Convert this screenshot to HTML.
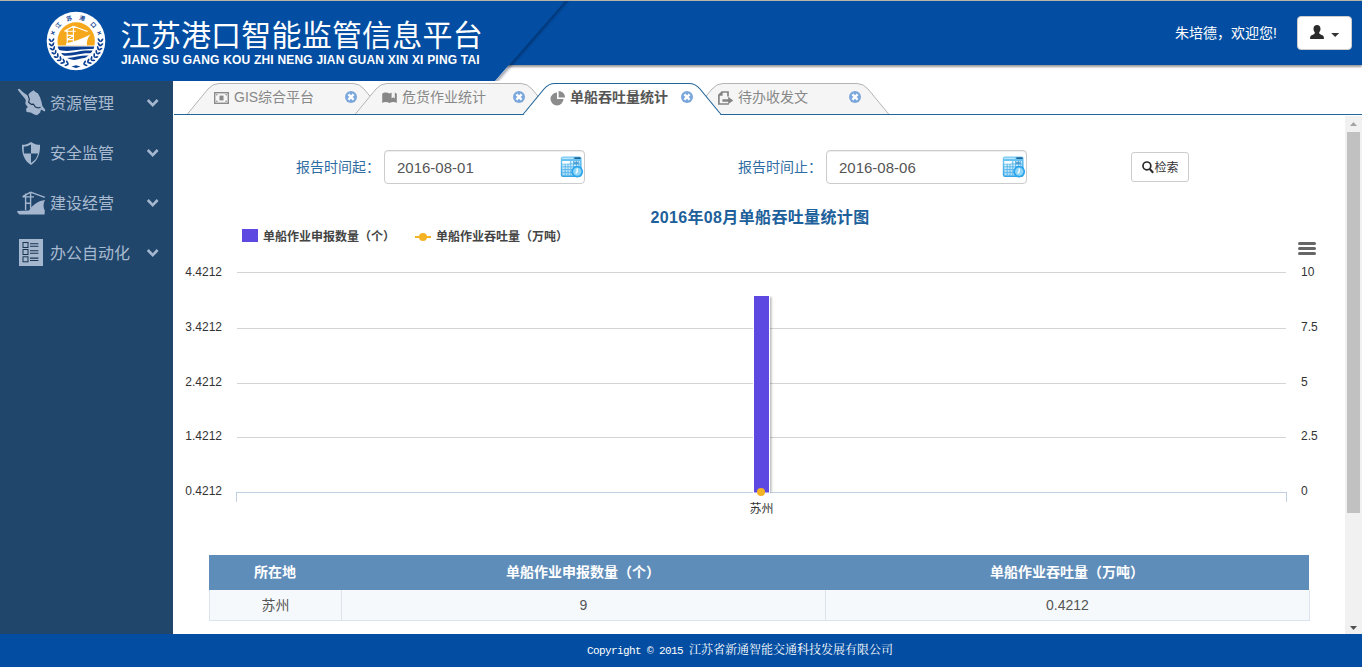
<!DOCTYPE html>
<html lang="zh-CN">
<head>
<meta charset="utf-8">
<title>江苏港口智能监管信息平台</title>
<style>
*{box-sizing:border-box;margin:0;padding:0}
html,body{width:1362px;height:667px;overflow:hidden;background:#fff}
body{position:relative;font-family:"Liberation Sans","Noto Sans CJK SC",sans-serif;font-size:14px;color:#333}
.abs{position:absolute}
#topline{left:0;top:0;width:1362px;height:1px;background:#b9b4a8}
#hdr{left:0;top:1px;width:1362px;height:64px;background:#034ea2;box-shadow:0 2px 2px rgba(0,0,0,.4)}
#hdrsvg{left:0;top:0;width:1362px;height:90px}
#title{left:120.5px;top:15.5px;font-size:30px;line-height:40px;color:#fff;white-space:nowrap;letter-spacing:.2px}
#sub{left:121px;top:53px;font-size:12px;line-height:14px;font-weight:bold;color:#fff;white-space:nowrap;letter-spacing:.2px}
#welcome{left:1175px;top:23px;font-size:14px;line-height:20px;color:#fff;white-space:nowrap}
#userbtn{left:1297px;top:16px;width:55px;height:34px;background:#fff;border-radius:4px;border:1px solid #ccc}
#side{left:0;top:81px;width:173px;height:553px;background:#21466b}
.mi{left:0;width:173px;height:50px;color:#a8bad0;font-size:16px;line-height:50px;white-space:nowrap}
.mi span{position:absolute;left:50px;top:0}
.mi svg{position:absolute}
#foot{left:0;top:634px;width:1362px;height:33px;background:#034ea2;color:#fff}
#foot div{position:absolute;left:587px;top:9px;font-size:12px;line-height:16px;white-space:pre;font-family:"Liberation Mono","Noto Serif CJK SC",monospace}
#foot span{font-size:11px;letter-spacing:-.6px}
#sbar{left:1345px;top:116px;width:17px;height:518px;background:#f1f1f1}
#sthumb{left:1347px;top:132px;width:13px;height:381px;background:#c1c1c1}
.tabtxt{font-size:14px;line-height:20px;color:#888;white-space:nowrap}
.lbl{font-size:14px;line-height:20px;color:#2f6ca3;white-space:nowrap;text-align:right;width:120px}
.inp{width:201px;height:34px;border:1px solid #ccc;border-radius:4px;background:#fff;box-shadow:inset 0 1px 1px rgba(0,0,0,.075);font-size:15px;line-height:33px;color:#555;padding-left:12px}
#btn{left:1131px;top:152px;width:58px;height:30px;border:1px solid #ccc;border-radius:3px;background:#fff;font-size:12px;line-height:28px;color:#333}
#ctitle{left:460px;top:207px;width:600px;text-align:center;font-size:16px;line-height:22px;font-weight:bold;color:#20609a;white-space:nowrap;letter-spacing:.35px}
.leg{font-size:12px;line-height:16px;font-weight:bold;color:#444;white-space:nowrap}
.yl{font-size:12px;line-height:14px;color:#333;white-space:nowrap}
.yl.l{left:150px;width:72px;text-align:right}
.yl.r{left:1301px}
#tbl{left:209px;top:555px;width:1100px}
.th{top:555px;height:35px;background:#5f8dba;color:#fff;font-weight:bold;font-size:14px;line-height:34px;text-align:center}
.td{top:590px;height:31px;background:#f5f9fc;color:#555;font-size:14px;line-height:30px;text-align:center;border-bottom:1px solid #dbe4ec;border-right:1px solid #dbe4ec}
</style>
</head>
<body>
<!-- header -->
<div id="hdr" class="abs"></div>
<svg id="hdrsvg" class="abs" viewBox="0 0 1362 90">
  <defs>
    <linearGradient id="dg" x1="0" y1="0" x2="1" y2="0"><stop offset="0" stop-color="#000" stop-opacity=".35"/><stop offset="1" stop-color="#000" stop-opacity="0"/></linearGradient>
    <filter id="sh2" x="-20%" y="-20%" width="140%" height="140%"><feGaussianBlur stdDeviation="1.5"/></filter>
    <filter id="sh" x="-5%" y="-5%" width="110%" height="120%"><feGaussianBlur stdDeviation="1.6"/></filter>
  </defs>
    <polygon points="0,1 565,1 495,81 0,81" fill="#034ea2"/>
  <clipPath id="dclip"><polygon points="565.3,1 1362,1 1362,81 495.3,81"/></clipPath>
  <g clip-path="url(#dclip)"><path d="M567.2,-1 L493.3,83.5" stroke="#00102e" stroke-width="3.4" opacity=".48" filter="url(#sh2)"/></g>
</svg>

<svg id="logo" class="abs" style="left:40px;top:5px;width:72px;height:72px" viewBox="40 5 72 72">
  <defs>
    <clipPath id="sunclip"><rect x="50" y="15" width="52" height="30.4"/></clipPath>
    <clipPath id="seaclip"><circle cx="76" cy="41" r="19.2"/></clipPath>
    
  </defs>
  <circle cx="76" cy="41" r="29.3" fill="#fff"/>
  <circle cx="76.2" cy="41" r="18.7" fill="#f5a81c" clip-path="url(#sunclip)"/>
  <!-- ship -->
  <path d="M66,45.4 L66,43.4 C74,41.4 83,38.6 90.6,34.6 C87.4,38 86.4,41.6 87,45.4 Z" fill="#fff"/>
  <path d="M67.2,44 V29.8 M73.4,42.4 V26 M64.4,31.2 H75.8 M67.2,35.4 H73.4 M67.2,39.6 L73.4,35.4 M67.2,39.6 H73.4 M73.4,26.2 L87.6,31.6 M73.4,26.2 L64.6,31" fill="none" stroke="#fff" stroke-width="1.1"/>
  <!-- sea -->
  <g clip-path="url(#seaclip)" fill="#0b3f93">
    <path d="M56,46.4 H96 V49.2 C88,48.4 80,49.6 72,50.6 C66,51.4 61,50.6 57,49.6 Z"/>
    <path d="M58.6,52.6 C64,53.6 70,53.2 76,52 C83,50.6 89,50.2 95,51 L93.6,53.6 C88,52.8 82,53.4 76,54.8 C70,56 65,56 60.4,55.2 Z"/>
    <path d="M62.6,57.6 C67,58.2 72,57.8 77,56.6 C82,55.4 87,55.2 92.4,55.8 L90.4,58.2 C86,57.6 82,58.2 78,59.2 C73,60.4 69,60.4 65.4,59.8 Z"/>
    <path d="M69,61.8 C73,62 77,61.2 80,60.6 C83,60 86,60 88.6,60.2 L86,62.2 C83,62 80,62.6 77,63.2 C75,63.6 73,63.4 72,63.2 Z"/>
  </g>
  <!-- wreath -->
  <g fill="#0b3f93"><g transform="translate(83.54,64.21) rotate(32.0)"><ellipse cx="0" cy="-2.1" rx="0.9" ry="2.2"/></g><g transform="translate(83.54,64.21) rotate(112.0)"><ellipse cx="0" cy="-2.1" rx="0.9" ry="2.2"/></g><g transform="translate(87.46,62.54) rotate(22.0)"><ellipse cx="0" cy="-2.1" rx="0.9" ry="2.2"/></g><g transform="translate(87.46,62.54) rotate(102.0)"><ellipse cx="0" cy="-2.1" rx="0.9" ry="2.2"/></g><g transform="translate(91.02,60.23) rotate(12.0)"><ellipse cx="0" cy="-2.1" rx="0.9" ry="2.2"/></g><g transform="translate(91.02,60.23) rotate(92.0)"><ellipse cx="0" cy="-2.1" rx="0.9" ry="2.2"/></g><g transform="translate(94.13,57.33) rotate(2.0)"><ellipse cx="0" cy="-2.1" rx="0.9" ry="2.2"/></g><g transform="translate(94.13,57.33) rotate(82.0)"><ellipse cx="0" cy="-2.1" rx="0.9" ry="2.2"/></g><g transform="translate(96.69,53.93) rotate(-8.0)"><ellipse cx="0" cy="-2.1" rx="0.9" ry="2.2"/></g><g transform="translate(96.69,53.93) rotate(72.0)"><ellipse cx="0" cy="-2.1" rx="0.9" ry="2.2"/></g><g transform="translate(98.62,50.14) rotate(-18.0)"><ellipse cx="0" cy="-2.1" rx="0.9" ry="2.2"/></g><g transform="translate(98.62,50.14) rotate(62.0)"><ellipse cx="0" cy="-2.1" rx="0.9" ry="2.2"/></g><g transform="translate(99.87,46.07) rotate(-28.0)"><ellipse cx="0" cy="-2.1" rx="0.9" ry="2.2"/></g><g transform="translate(99.87,46.07) rotate(52.0)"><ellipse cx="0" cy="-2.1" rx="0.9" ry="2.2"/></g><g transform="translate(100.39,41.85) rotate(-38.0)"><ellipse cx="0" cy="-2.1" rx="0.9" ry="2.2"/></g><g transform="translate(100.39,41.85) rotate(42.0)"><ellipse cx="0" cy="-2.1" rx="0.9" ry="2.2"/></g><g transform="translate(68.46,64.21) rotate(-32.0)"><ellipse cx="0" cy="-2.1" rx="0.9" ry="2.2"/></g><g transform="translate(68.46,64.21) rotate(-112.0)"><ellipse cx="0" cy="-2.1" rx="0.9" ry="2.2"/></g><g transform="translate(64.54,62.54) rotate(-22.0)"><ellipse cx="0" cy="-2.1" rx="0.9" ry="2.2"/></g><g transform="translate(64.54,62.54) rotate(-102.0)"><ellipse cx="0" cy="-2.1" rx="0.9" ry="2.2"/></g><g transform="translate(60.98,60.23) rotate(-12.0)"><ellipse cx="0" cy="-2.1" rx="0.9" ry="2.2"/></g><g transform="translate(60.98,60.23) rotate(-92.0)"><ellipse cx="0" cy="-2.1" rx="0.9" ry="2.2"/></g><g transform="translate(57.87,57.33) rotate(-2.0)"><ellipse cx="0" cy="-2.1" rx="0.9" ry="2.2"/></g><g transform="translate(57.87,57.33) rotate(-82.0)"><ellipse cx="0" cy="-2.1" rx="0.9" ry="2.2"/></g><g transform="translate(55.31,53.93) rotate(8.0)"><ellipse cx="0" cy="-2.1" rx="0.9" ry="2.2"/></g><g transform="translate(55.31,53.93) rotate(-72.0)"><ellipse cx="0" cy="-2.1" rx="0.9" ry="2.2"/></g><g transform="translate(53.38,50.14) rotate(18.0)"><ellipse cx="0" cy="-2.1" rx="0.9" ry="2.2"/></g><g transform="translate(53.38,50.14) rotate(-62.0)"><ellipse cx="0" cy="-2.1" rx="0.9" ry="2.2"/></g><g transform="translate(52.13,46.07) rotate(28.0)"><ellipse cx="0" cy="-2.1" rx="0.9" ry="2.2"/></g><g transform="translate(52.13,46.07) rotate(-52.0)"><ellipse cx="0" cy="-2.1" rx="0.9" ry="2.2"/></g><g transform="translate(51.61,41.85) rotate(38.0)"><ellipse cx="0" cy="-2.1" rx="0.9" ry="2.2"/></g><g transform="translate(51.61,41.85) rotate(-42.0)"><ellipse cx="0" cy="-2.1" rx="0.9" ry="2.2"/></g></g>
  <path d="M71.5,66.6 L76,65.2 L80.5,66.6 L76,68Z" fill="#0b3f93"/>
  <g font-family="'Liberation Sans','Noto Sans CJK SC',sans-serif" font-weight="bold" fill="#0b3f93"><text x="0" y="0" font-size="7.5" text-anchor="middle" dominant-baseline="central" transform="translate(52.74,32.99) rotate(-71)">×</text><text x="0" y="0" font-size="5.6" text-anchor="middle" dominant-baseline="central" transform="translate(58.46,25.21) rotate(-48)">江</text><text x="0" y="0" font-size="5.6" text-anchor="middle" dominant-baseline="central" transform="translate(69.10,18.43) rotate(-17)">苏</text><text x="0" y="0" font-size="5.6" text-anchor="middle" dominant-baseline="central" transform="translate(82.11,18.20) rotate(15)">港</text><text x="0" y="0" font-size="5.6" text-anchor="middle" dominant-baseline="central" transform="translate(93.26,24.90) rotate(47)">口</text><text x="0" y="0" font-size="7.5" text-anchor="middle" dominant-baseline="central" transform="translate(99.26,32.99) rotate(71)">×</text></g>
</svg>
<div id="topline" class="abs"></div>
<div id="title" class="abs">江苏港口智能监管信息平台</div>
<div id="sub" class="abs">JIANG SU GANG KOU ZHI NENG JIAN GUAN XIN XI PING TAI</div>
<div id="welcome" class="abs">朱培德，欢迎您!</div>
<div id="userbtn" class="abs"><svg style="position:absolute;left:0;top:0" width="53" height="32" viewBox="1298 17 53 32">
  <path d="M1317,25 c2.2,0 3.5,1.6 3.5,3.8 c0,1.6 -0.7,3 -1.4,3.8 c0.1,1.2 0.6,1.6 2,2.1 c1.8,0.7 2.8,1.3 2.8,3 v1.3 h-13.8 v-1.3 c0,-1.7 1,-2.3 2.8,-3 c1.4,-0.5 1.9,-0.9 2,-2.1 c-0.7,-0.8 -1.4,-2.2 -1.4,-3.8 c0,-2.2 1.3,-3.8 3.5,-3.8z" fill="#2b2b2b"/>
  <path d="M1331.2,33 h8 l-4,4z" fill="#333"/>
</svg></div>

<!-- sidebar -->
<div id="side" class="abs">
  <svg class="abs" style="left:0;top:-1px;width:173px;height:200px" viewBox="0 80 173 200">
    <!-- map -->
    <path d="M17.6,89.6 L19.4,88.8 L23,92.2 L27.6,95.4 L30.2,92.6 L33.6,90.2 L35.4,92 L38,93.6 L40,97.2 L41.4,101.4 L42.4,106 L45.4,110 L44.6,111.4 L41,109.6 L40.2,112.4 L37,115.2 L34.4,114.4 L30.6,112.6 L26.6,112 L26,109 L27.8,107 L25.4,104 L25.8,100 L24,97.4 L21.4,94.6 Z" fill="#a4b7cf"/>
    <path d="M27.8,94.6 L29.4,99.2 L28.6,102.2 L31.4,104.4 L33.4,104.2 L35.4,107 L38.4,108 L40.6,107.2" fill="none" stroke="#1a3350" stroke-width="1.1"/>
    <!-- shield -->
    <path d="M31,142 C28,144 25,144.8 22,144.8 C21.6,154 24.6,161 31,165 C37.4,161 40.4,154 40,144.8 C37,144.8 34,144 31,142Z" fill="#a4b7cf"/>
    <path d="M31,144.4 V153.6 H24 C23.7,151 23.7,148.6 23.8,146.6 C26.6,146.4 29,145.6 31,144.4Z" fill="#21466b"/>
    <path d="M31,153.6 H38 C37.2,157.6 35,160.8 31,163Z" fill="#21466b"/>
    <!-- ship -->
    <path d="M17,211 L29,210.4 C33,204.5 38.6,200.6 45,200 C43.2,203.4 43,207 44.8,210.6 L44.6,214.4 L19.6,214.4 C18.2,213.6 17.4,212.4 17,211Z" fill="#a4b7cf"/>
    <path d="M25.6,193.4 V210 M30.6,192 V208.4 M22.6,196.9 H34 M25.6,203.3 H30.6 M30.6,192.2 L44.8,197.4 M30.6,192.2 L22.6,196.6" fill="none" stroke="#a4b7cf" stroke-width="1.4"/>
    <!-- list -->
    <rect x="19" y="239" width="24" height="27" fill="#a4b7cf"/>
    <g fill="none" stroke="#1a3350" stroke-width="1">
      <rect x="23" y="242.5" width="5" height="5"/><rect x="23" y="249.5" width="5" height="5"/><rect x="23" y="256.8" width="5" height="5"/>
    </g>
    <g stroke="#1a3350" stroke-width="1.1">
      <path d="M30,243.8H38.4 M30,246.2H38.4 M30,250.8H38.4 M30,253.2H38.4 M30,258.1H38.4 M30,260.5H38.4"/>
    </g>
    <!-- chevrons -->
    <g fill="none" stroke="#a4b7cf" stroke-width="2.6" stroke-linecap="butt" stroke-linejoin="miter">
      <path d="M147.8,100 L152.7,105.2 L157.6,100"/>
      <path d="M147.8,150 L152.7,155.2 L157.6,150"/>
      <path d="M147.8,200 L152.7,205.2 L157.6,200"/>
      <path d="M147.8,250 L152.7,255.2 L157.6,250"/>
    </g>
  </svg>
  <div class="mi abs" style="top:-2.5px"><span>资源管理</span></div>
  <div class="mi abs" style="top:47.5px"><span>安全监管</span></div>
  <div class="mi abs" style="top:97.5px"><span>建设经营</span></div>
  <div class="mi abs" style="top:147.5px"><span>办公自动化</span></div>
</div>

<!-- tabs -->
<svg id="tabs" class="abs" style="left:173px;top:80px;width:1189px;height:40px" viewBox="173 80 1189 40">
  <path d="M187,114.5 L208,89.0 Q212.5,83.5 219,83.5 L353,83.5 Q359.5,83.5 364,89.0 L385,114.5" fill="#f5f5f5" stroke="#b4b4b4" stroke-width="1"/>
  <path d="M355,114.5 L376,89.0 Q380.5,83.5 387,83.5 L521,83.5 Q527.5,83.5 532,89.0 L553,114.5" fill="#f5f5f5" stroke="#b4b4b4" stroke-width="1"/>
  <path d="M691,114.5 L712,89.0 Q716.5,83.5 723,83.5 L857,83.5 Q863.5,83.5 868,89.0 L889,114.5" fill="#f5f5f5" stroke="#b4b4b4" stroke-width="1"/>
  <path d="M174,114.5 H1362" stroke="#22669a" stroke-width="1.2" fill="none"/>
  <path d="M523,114.5 L544,89.0 Q548.5,83.5 555,83.5 L689,83.5 Q695.5,83.5 700,89.0 L721,114.5" fill="#fff" stroke="#22669a" stroke-width="1.15"/>
  <path d="M524.2,114.6 H719.8" stroke="#fff" stroke-width="2.2" fill="none"/>
  <g transform="translate(351,97)"><circle r="6" fill="#7ba7dc"/><path d="M-2.6,-2.6 L2.6,2.6 M2.6,-2.6 L-2.6,2.6" stroke="#fff" stroke-width="2.2" stroke-linecap="butt"/></g>
  <g transform="translate(519,97)"><circle r="6" fill="#7ba7dc"/><path d="M-2.6,-2.6 L2.6,2.6 M2.6,-2.6 L-2.6,2.6" stroke="#fff" stroke-width="2.2" stroke-linecap="butt"/></g>
  <g transform="translate(687,97)"><circle r="6" fill="#7ba7dc"/><path d="M-2.6,-2.6 L2.6,2.6 M2.6,-2.6 L-2.6,2.6" stroke="#fff" stroke-width="2.2" stroke-linecap="butt"/></g>
  <g transform="translate(855,97)"><circle r="6" fill="#7ba7dc"/><path d="M-2.6,-2.6 L2.6,2.6 M2.6,-2.6 L-2.6,2.6" stroke="#fff" stroke-width="2.2" stroke-linecap="butt"/></g>
  <g fill="none" stroke="#8a8a8a"><rect x="214.7" y="92.7" width="13.6" height="10.6" stroke-width="1.4"/><rect x="219.5" y="95.6" width="4" height="4.8" fill="#8a8a8a" stroke="none"/><path d="M216.5,95.5v-1h1.2 M225.3,94.5h1.2v1 M216.5,100.5v1h1.2 M225.3,101.5h1.2v-1" stroke-width=".9"/></g>
  <path d="M382.2,93.8 C383.6,92.2 387.2,91.9 389.5,93.5 C391.8,91.9 395.4,92.2 396.8,93.8 V102.9 C395,101.7 392,101.5 389.5,103 C387,101.5 384,101.7 382.2,102.9Z" fill="#878787"/><path d="M391.6,92 V98.6 L393.2,97.2 L394.8,98.6 V92Z" fill="#f5f5f5"/>
  <path d="M557,92.5 A6.5,6.5 0 1 0 563.5,99 H557z" fill="#8c8c8c"/><path d="M558.6,91 A6.4,6.4 0 0 1 565,97.4 H558.6z" fill="#8c8c8c"/>
  <path d="M728,96.4 V92 H722 L718.9,95.2 V104 H728 V103.2" fill="none" stroke="#848484" stroke-width="1.7"/><path d="M718.4,95.8 H722.6 V91.6Z" fill="#848484"/><path d="M722.4,99.3 H728.2 V96.7 L733.2,100.5 L728.2,104.3 V101.8 H722.4Z" fill="#848484"/>
</svg>


<div class="tabtxt abs" style="left:234px;top:87px">GIS综合平台</div>
<div class="tabtxt abs" style="left:402px;top:87px">危货作业统计</div>
<div class="tabtxt abs" style="left:570px;top:87px;font-weight:bold;color:#555">单船吞吐量统计</div>
<div class="tabtxt abs" style="left:738px;top:87px">待办收发文</div>

<!-- form -->
<div class="lbl abs" style="left:260px;top:156.5px">报告时间起：</div>
<div class="inp abs" style="left:384px;top:150px">2016-08-01</div>
<div class="lbl abs" style="left:702px;top:156.5px">报告时间止：</div>
<div class="inp abs" style="left:826px;top:150px">2016-08-06</div>
<svg class="abs" style="left:560px;top:156px;width:24px;height:23px" viewBox="0 0 24 23">
  <defs><linearGradient id="cg560" x1="0" y1="0" x2="0" y2="1"><stop offset="0" stop-color="#74c8f3"/><stop offset="1" stop-color="#33a4e6"/></linearGradient>
  <linearGradient id="ci560" x1="0" y1="0" x2="0" y2="1"><stop offset="0" stop-color="#f4fbff"/><stop offset="1" stop-color="#a9dbf6"/></linearGradient></defs>
  <rect x="0.8" y="0.6" width="20.8" height="20.4" rx="2.2" fill="url(#cg560)"/>
  <rect x="14.4" y="1.3" width="6.2" height="1.7" fill="#1c6395"/>
  <rect x="2" y="1.7" width="11.4" height="1.1" fill="#c9ecfc"/>
  <rect x="2.4" y="5" width="17.6" height="14.4" fill="url(#ci560)"/>
  <g stroke="#5ab8ec" stroke-width="1"><path d="M2.4,8H20 M2.4,10.8H20 M2.4,13.6H20 M2.4,16.4H20 M5.2,5V19.4 M8,5V19.4 M10.8,5V19.4 M13.6,5V19.4 M16.4,5V19.4 M18.8,5V19.4"/></g>
  <rect x="2.4" y="5" width="6.6" height="2.6" fill="#fafdff"/>
  <rect x="13.8" y="5.6" width="4.8" height="2.6" fill="#3a8dc6" opacity=".75"/>
  <circle cx="17.2" cy="15.6" r="5.9" fill="#2ba4ec"/>
  <circle cx="17.2" cy="15.6" r="4.2" fill="#8ed6f8"/>
  <path d="M17.2,12.6V15.8L15.8,17.4" fill="none" stroke="#fff" stroke-width="1.3"/>
</svg>
<svg class="abs" style="left:1002px;top:156px;width:24px;height:23px" viewBox="0 0 24 23">
  <defs><linearGradient id="cg1002" x1="0" y1="0" x2="0" y2="1"><stop offset="0" stop-color="#74c8f3"/><stop offset="1" stop-color="#33a4e6"/></linearGradient>
  <linearGradient id="ci1002" x1="0" y1="0" x2="0" y2="1"><stop offset="0" stop-color="#f4fbff"/><stop offset="1" stop-color="#a9dbf6"/></linearGradient></defs>
  <rect x="0.8" y="0.6" width="20.8" height="20.4" rx="2.2" fill="url(#cg1002)"/>
  <rect x="14.4" y="1.3" width="6.2" height="1.7" fill="#1c6395"/>
  <rect x="2" y="1.7" width="11.4" height="1.1" fill="#c9ecfc"/>
  <rect x="2.4" y="5" width="17.6" height="14.4" fill="url(#ci1002)"/>
  <g stroke="#5ab8ec" stroke-width="1"><path d="M2.4,8H20 M2.4,10.8H20 M2.4,13.6H20 M2.4,16.4H20 M5.2,5V19.4 M8,5V19.4 M10.8,5V19.4 M13.6,5V19.4 M16.4,5V19.4 M18.8,5V19.4"/></g>
  <rect x="2.4" y="5" width="6.6" height="2.6" fill="#fafdff"/>
  <rect x="13.8" y="5.6" width="4.8" height="2.6" fill="#3a8dc6" opacity=".75"/>
  <circle cx="17.2" cy="15.6" r="5.9" fill="#2ba4ec"/>
  <circle cx="17.2" cy="15.6" r="4.2" fill="#8ed6f8"/>
  <path d="M17.2,12.6V15.8L15.8,17.4" fill="none" stroke="#fff" stroke-width="1.3"/>
</svg>
<div id="btn" class="abs"><svg style="position:absolute;left:0;top:0" width="56" height="28" viewBox="1132 153 56 28"><circle cx="1146.9" cy="165.9" r="3.9" fill="none" stroke="#2a2a2a" stroke-width="1.7"/><path d="M1149.7,169 L1153.2,172.7" stroke="#2a2a2a" stroke-width="2.1"/></svg><span style="position:absolute;left:22.5px;top:1px">检索</span></div>

<!-- chart -->
<div id="ctitle" class="abs">2016年08月单船吞吐量统计图</div>


<svg id="chart" class="abs" style="left:173px;top:225px;width:1172px;height:300px" viewBox="173 225 1172 300">
  <defs><filter id="bsh" x="-50%" y="-5%" width="200%" height="110%"><feGaussianBlur stdDeviation="0.9"/></filter></defs>
  <g stroke="#d4d4d4" stroke-width="1" shape-rendering="crispEdges">
    <path d="M237,272.5H1286 M237,328.5H1286 M237,383.5H1286 M237,437.5H1286"/>
  </g>
  <path d="M236.5,502V492.5H1286.5V502" fill="none" stroke="#c0d0e0" stroke-width="1" shape-rendering="crispEdges"/>
  <rect x="755" y="297" width="16.5" height="195.5" fill="#000" opacity=".28" filter="url(#bsh)"/>
  <rect x="753.5" y="295.5" width="16" height="197.5" fill="#5e48e2" stroke="#fff" stroke-width="1"/>
  <circle cx="761" cy="492" r="4" fill="#f4b324"/>
  <rect x="242" y="229" width="16" height="13" fill="#5e48e2"/>
  <path d="M415,237H431" stroke="#f4b324" stroke-width="2"/>
  <circle cx="423" cy="237" r="4" fill="#f4b324"/>
  <g stroke="#666" stroke-width="3" stroke-linecap="round"><path d="M1299.5,243.5H1314.5 M1299.5,248.5H1314.5 M1299.5,253.5H1314.5"/></g>
</svg>
<div class="leg abs" style="left:263px;top:229px">单船作业申报数量（个）</div>
<div class="leg abs" style="left:436px;top:229px">单船作业吞吐量（万吨）</div>
<div class="yl l abs" style="top:265px">4.4212</div>
<div class="yl l abs" style="top:320px">3.4212</div>
<div class="yl l abs" style="top:375px">2.4212</div>
<div class="yl l abs" style="top:429px">1.4212</div>
<div class="yl l abs" style="top:484px">0.4212</div>
<div class="yl r abs" style="top:265px">10</div>
<div class="yl r abs" style="top:320px">7.5</div>
<div class="yl r abs" style="top:375px">5</div>
<div class="yl r abs" style="top:429px">2.5</div>
<div class="yl r abs" style="top:484px">0</div>
<div class="yl abs" style="left:731.5px;top:502px;width:60px;text-align:center">苏州</div>

<!-- table -->
<div class="th abs" style="left:209px;width:1100px"></div>
<div class="th abs" style="left:209px;width:132px">所在地</div>
<div class="th abs" style="left:341px;width:484px">单船作业申报数量（个）</div>
<div class="th abs" style="left:825px;width:484px">单船作业吞吐量（万吨）</div>
<div class="td abs" style="left:209px;width:133px;border-left:1px solid #dbe4ec">苏州</div>
<div class="td abs" style="left:342px;width:484px">9</div>
<div class="td abs" style="left:826px;width:484px">0.4212</div>

<!-- scrollbar -->
<div id="sbar" class="abs"></div>
<div id="sthumb" class="abs"></div>
<svg class="abs" style="left:1345px;top:116px;width:17px;height:518px" viewBox="1345 116 17 518"><path d="M1350,126 L1353.5,122 L1357,126Z" fill="#a3a3a3"/><path d="M1350,626 L1357,626 L1353.5,630Z" fill="#505050"/></svg>

<!-- footer -->
<div id="foot" class="abs"><div><span>Copyright © 2015 </span>江苏省新通智能交通科技发展有限公司</div></div>
</body>
</html>
